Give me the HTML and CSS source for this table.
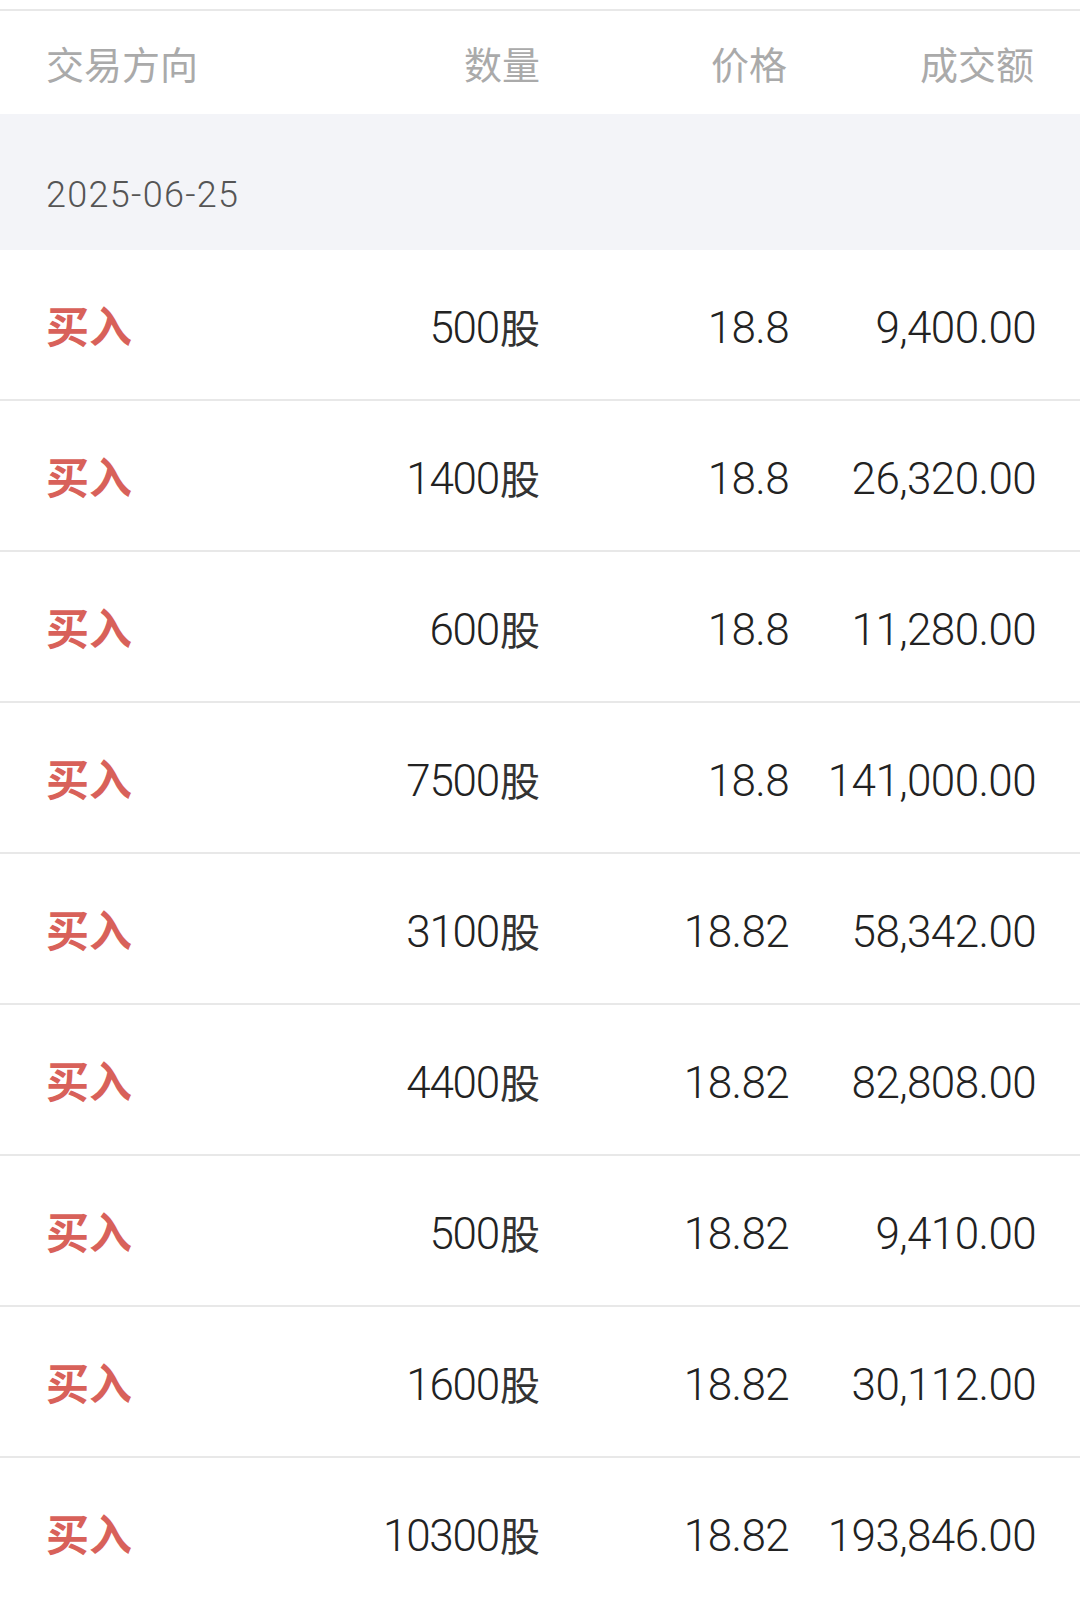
FILE: index.html
```html
<!DOCTYPE html>
<html lang="zh-CN">
<head>
<meta charset="utf-8">
<title>成交明细</title>
<link rel="stylesheet" href="styles.css">
</head>
<body>
<div class="page">
  <div class="thead">
    <span class="cell left">交易方向</span>
    <span class="cell">数量</span>
    <span class="cell">价格</span>
    <span class="cell">成交额</span>
  </div>
  <div class="date">2025-06-25</div>
  <div class="list">
    <div class="row"><span class="cell left dir">买入</span><span class="cell qty">500<span class="unit">股</span></span><span class="cell num">18.8</span><span class="cell num">9,400.00</span></div>
    <div class="row"><span class="cell left dir">买入</span><span class="cell qty">1400<span class="unit">股</span></span><span class="cell num">18.8</span><span class="cell num">26,320.00</span></div>
    <div class="row"><span class="cell left dir">买入</span><span class="cell qty">600<span class="unit">股</span></span><span class="cell num">18.8</span><span class="cell num">11,280.00</span></div>
    <div class="row"><span class="cell left dir">买入</span><span class="cell qty">7500<span class="unit">股</span></span><span class="cell num">18.8</span><span class="cell num">141,000.00</span></div>
    <div class="row"><span class="cell left dir">买入</span><span class="cell qty">3100<span class="unit">股</span></span><span class="cell num">18.82</span><span class="cell num">58,342.00</span></div>
    <div class="row"><span class="cell left dir">买入</span><span class="cell qty">4400<span class="unit">股</span></span><span class="cell num">18.82</span><span class="cell num">82,808.00</span></div>
    <div class="row"><span class="cell left dir">买入</span><span class="cell qty">500<span class="unit">股</span></span><span class="cell num">18.82</span><span class="cell num">9,410.00</span></div>
    <div class="row"><span class="cell left dir">买入</span><span class="cell qty">1600<span class="unit">股</span></span><span class="cell num">18.82</span><span class="cell num">30,112.00</span></div>
    <div class="row"><span class="cell left dir">买入</span><span class="cell qty">10300<span class="unit">股</span></span><span class="cell num">18.82</span><span class="cell num">193,846.00</span></div>
  </div>
</div>
</body>
</html>
```

FILE: styles.css
```css
html, body {
  margin: 0;
  padding: 0;
  background: #ffffff;
}

body {
  font-family: Roboto, "Noto Sans CJK SC", sans-serif;
  color: #333333;
}

.page {
  padding-top: 9px;
  background: #ffffff;
}

.thead,
.row {
  display: grid;
  grid-template-columns: repeat(4, 1fr);
  align-items: center;
  padding: 0 46px;
}

.cell {
  text-align: right;
  white-space: nowrap;
}

.cell.left {
  text-align: left;
}

.thead {
  border-top: 2px solid #e8e8e8;
  height: 103px;
  font-family: "Noto Sans CJK SC", sans-serif;
  font-size: 38px;
  line-height: 1;
  color: #aaaaaa;
}

.date {
  background: #f3f4f8;
  height: 136px;
  box-sizing: border-box;
  padding: 63px 46px 0;
  font-family: Roboto, sans-serif;
  font-weight: 300;
  font-size: 36px;
  line-height: 36px;
  letter-spacing: 1.3px;
  color: #555555;
}

.row {
  height: 149px;
  border-bottom: 2px solid #e8e8e8;
}

.dir {
  font-family: "Noto Sans CJK SC", sans-serif;
  font-weight: 700;
  font-size: 43px;
  line-height: 1;
  color: #d8615a;
}

.qty,
.num {
  font-family: Roboto, sans-serif;
  font-weight: 300;
  font-size: 44px;
  line-height: 1;
  color: #222222;
  padding-top: 6px;
  letter-spacing: -1.2px;
}

.num {
  letter-spacing: -0.6px;
  margin-right: -2px;
}

.unit {
  font-family: "Noto Sans CJK SC", sans-serif;
  font-weight: 400;
  font-size: 40px;
  letter-spacing: 0;
  margin-left: 1px;
  color: #333333;
}
```
